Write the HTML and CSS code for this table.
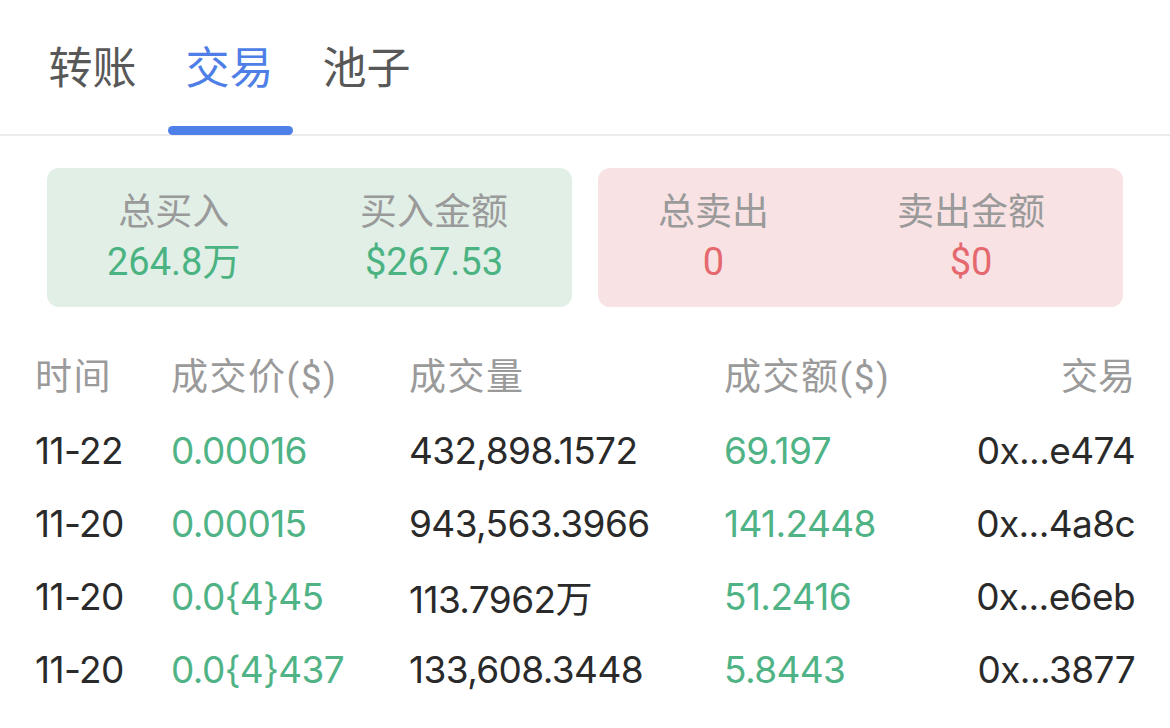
FILE: index.html
```html
<!DOCTYPE html>
<html lang="zh-CN">
<head>
<meta charset="utf-8">
<title>交易</title>
<link rel="stylesheet" href="styles.css">
</head>
<body>
<div class="page">
  <nav class="tabs">
    <div class="tab">转账</div>
    <div class="tab active">交易</div>
    <div class="tab">池子</div>
  </nav>

  <section class="summary">
    <div class="card buy">
      <div class="stat">
        <div class="label">总买入</div>
        <div class="value">264.8万</div>
      </div>
      <div class="stat">
        <div class="label">买入金额</div>
        <div class="value">$267.53</div>
      </div>
    </div>
    <div class="card sell">
      <div class="stat">
        <div class="label">总卖出</div>
        <div class="value">0</div>
      </div>
      <div class="stat">
        <div class="label">卖出金额</div>
        <div class="value">$0</div>
      </div>
    </div>
  </section>

  <section class="trades">
    <div class="row head">
      <div>时间</div>
      <div>成交价($)</div>
      <div>成交量</div>
      <div>成交额($)</div>
      <div class="tx">交易</div>
    </div>
    <div class="row">
      <div>11-22</div>
      <div class="up">0.00016</div>
      <div>432,898.1572</div>
      <div class="up">69.197</div>
      <div class="tx">0x...e474</div>
    </div>
    <div class="row">
      <div>11-20</div>
      <div class="up">0.00015</div>
      <div>943,563.3966</div>
      <div class="up">141.2448</div>
      <div class="tx">0x...4a8c</div>
    </div>
    <div class="row">
      <div>11-20</div>
      <div class="up">0.0{4}45</div>
      <div>113.7962万</div>
      <div class="up">51.2416</div>
      <div class="tx">0x...e6eb</div>
    </div>
    <div class="row">
      <div>11-20</div>
      <div class="up">0.0{4}437</div>
      <div>133,608.3448</div>
      <div class="up">5.8443</div>
      <div class="tx">0x...3877</div>
    </div>
  </section>
</div>
</body>
</html>
```

FILE: styles.css
```css
* { box-sizing: border-box; }

html, body {
  margin: 0;
  padding: 0;
  background: #ffffff;
}

body {
  font-family: "Noto Sans CJK SC", "Noto Sans", sans-serif;
  color: #2a2a2a;
}

.page {
  width: 1170px;
}

/* Tabs */
.tabs {
  display: flex;
  gap: 12px;
  padding-left: 30px;
  height: 136px;
  border-bottom: 2px solid #ececec;
}

.tab {
  position: relative;
  width: 125px;
  text-align: center;
  font-size: 44px;
  line-height: 44px;
  padding-top: 43px;
  color: #585858;
}

.tab.active {
  color: #4f7fe6;
}

.tab.active::after {
  content: "";
  position: absolute;
  left: 1px;
  right: -1px;
  bottom: -1px;
  height: 9px;
  border-radius: 5px;
  background: #4f7fe9;
}

/* Summary cards */
.summary {
  display: grid;
  grid-template-columns: 1fr 1fr;
  gap: 26px;
  padding: 32px 47px 0;
}

.card {
  height: 139px;
  border-radius: 12px;
  display: flex;
  justify-content: space-between;
  padding: 15px 60px 0;
}

.card.buy {
  background: #e1efe7;
  padding-right: 64px;
}

.card.sell {
  background: #f8e2e4;
  padding-right: 78px;
}

.stat {
  display: flex;
  flex-direction: column;
  align-items: center;
}

.label {
  font-size: 37px;
  line-height: 52px;
  color: #9a9a9a;
}

.value {
  font-family: Roboto, "Noto Sans CJK SC", sans-serif;
  font-size: 38px;
  line-height: 54px;
}

.buy .value { color: #4bb382; }
.sell .value { color: #e5686f; }

/* Trades table */
.trades {
  padding: 35px 35px 0;
}

.row {
  display: grid;
  grid-template-columns: 136px 238px 315px 1fr auto;
  align-items: center;
  height: 73px;
  font-family: Inter, "Noto Sans CJK SC", sans-serif;
  font-size: 37px;
  letter-spacing: -0.6px;
  color: #2a2a2a;
}

.row.head {
  height: 72px;
  padding-bottom: 8px;
  font-family: Roboto, "Noto Sans CJK SC", sans-serif;
  font-size: 37px;
  letter-spacing: 1.5px;
  color: #9a9a9a;
}

.row.head .tx { letter-spacing: 0; }

.row .up { color: #4fb386; }

.row .tx { text-align: right; }
```
